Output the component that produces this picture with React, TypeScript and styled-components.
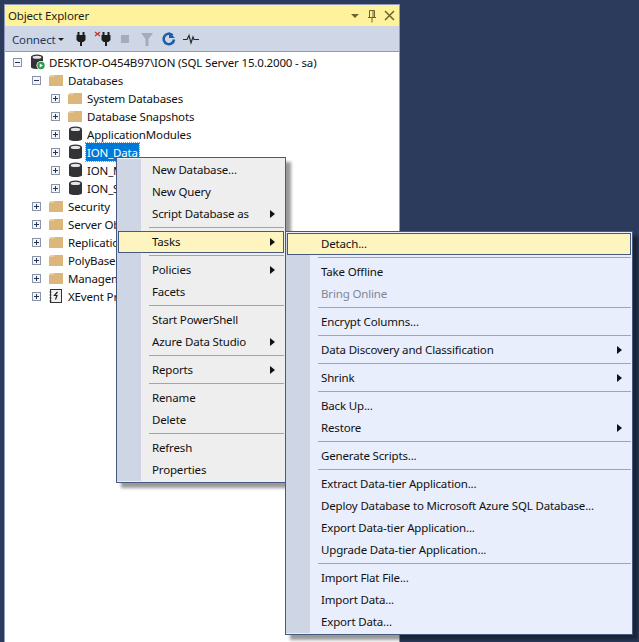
import React from 'react';
import styled, { createGlobalStyle } from 'styled-components';

const GlobalStyle = createGlobalStyle`
  html, body {
    margin: 0;
    height: 100%;
    overflow: hidden;
    background: #2c3b5b;
  }
  * {
    box-sizing: border-box;
  }
`;

type MenuEntry =
  | { sep: true }
  | { label: string; arrow?: boolean; active?: boolean; disabled?: boolean };

const contextItems: MenuEntry[] = [
  { label: 'New Database...' },
  { label: 'New Query' },
  { label: 'Script Database as', arrow: true },
  { sep: true },
  { label: 'Tasks', arrow: true, active: true },
  { sep: true },
  { label: 'Policies', arrow: true },
  { label: 'Facets' },
  { sep: true },
  { label: 'Start PowerShell' },
  { label: 'Azure Data Studio', arrow: true },
  { sep: true },
  { label: 'Reports', arrow: true },
  { sep: true },
  { label: 'Rename' },
  { label: 'Delete' },
  { sep: true },
  { label: 'Refresh' },
  { label: 'Properties' },
];

const taskItems: MenuEntry[] = [
  { label: 'Detach...', active: true },
  { sep: true },
  { label: 'Take Offline' },
  { label: 'Bring Online', disabled: true },
  { sep: true },
  { label: 'Encrypt Columns...' },
  { sep: true },
  { label: 'Data Discovery and Classification', arrow: true },
  { sep: true },
  { label: 'Shrink', arrow: true },
  { sep: true },
  { label: 'Back Up...' },
  { label: 'Restore', arrow: true },
  { sep: true },
  { label: 'Generate Scripts...' },
  { sep: true },
  { label: 'Extract Data-tier Application...' },
  { label: 'Deploy Database to Microsoft Azure SQL Database...' },
  { label: 'Export Data-tier Application...' },
  { label: 'Upgrade Data-tier Application...' },
  { sep: true },
  { label: 'Import Flat File...' },
  { label: 'Import Data...' },
  { label: 'Export Data...' },
];

type TreeNode = {
  label: string;
  level: number;
  icon: 'server' | 'folder' | 'db' | 'xevent';
  open?: boolean;
  selected?: boolean;
};

const treeNodes: TreeNode[] = [
  { label: 'DESKTOP-O454B97\\ION (SQL Server 15.0.2000 - sa)', level: 0, icon: 'server', open: true },
  { label: 'Databases', level: 1, icon: 'folder', open: true },
  { label: 'System Databases', level: 2, icon: 'folder' },
  { label: 'Database Snapshots', level: 2, icon: 'folder' },
  { label: 'ApplicationModules', level: 2, icon: 'db' },
  { label: 'ION_Data', level: 2, icon: 'db', selected: true },
  { label: 'ION_Model', level: 2, icon: 'db' },
  { label: 'ION_Stage', level: 2, icon: 'db' },
  { label: 'Security', level: 1, icon: 'folder' },
  { label: 'Server Objects', level: 1, icon: 'folder' },
  { label: 'Replication', level: 1, icon: 'folder' },
  { label: 'PolyBase', level: 1, icon: 'folder' },
  { label: 'Management', level: 1, icon: 'folder' },
  { label: 'XEvent Profiler', level: 1, icon: 'xevent' },
];

const FolderIcon = () => (
  <svg width="14" height="13" viewBox="0 0 14 13">
    <path d="M0 3 L2 1 H14 V12 H0 Z" fill="#dcb67a" />
    <path d="M0 3 L2 1 H6 L5 3 Z" fill="#e8cc9c" />
  </svg>
);

const DbIcon = () => (
  <svg width="15" height="16" viewBox="0 0 15 16">
    <path d="M1 3 V13 C1 15.8 14 15.8 14 13 V3 Z" fill="#333337" />
    <ellipse cx="7.5" cy="3.2" rx="6.5" ry="2.8" fill="#333337" />
    <ellipse cx="7.5" cy="3.4" rx="4.8" ry="1.6" fill="#e6e6e6" />
  </svg>
);

const ServerIcon = () => (
  <svg width="16" height="16" viewBox="0 0 16 16">
    <path d="M1 3 V13 C1 15.6 13 15.6 13 13 V3 Z" fill="#333337" />
    <ellipse cx="7" cy="3" rx="6" ry="2.6" fill="#333337" />
    <ellipse cx="7" cy="3.2" rx="4.4" ry="1.5" fill="#e6e6e6" />
    <circle cx="11" cy="11.5" r="4.5" fill="#fff" />
    <circle cx="11" cy="11.5" r="3.7" fill="#2e9e46" />
    <path d="M9.7 9.6 L12.9 11.5 L9.7 13.4 Z" fill="#fff" />
  </svg>
);

const XEventIcon = () => (
  <svg width="14" height="14" viewBox="0 0 14 14">
    <rect x="1.5" y="0.5" width="11" height="13" fill="#f0f0f0" stroke="#333" />
    <path d="M0.5 3 H2.5 M0.5 6 H2.5 M0.5 9 H2.5 M0.5 12 H2.5" stroke="#333" />
    <path d="M8.5 3 L5.5 6.5 H8 L6.5 10.5" fill="none" stroke="#222" strokeWidth="1.2" />
  </svg>
);

const PlugIcon = () => (
  <svg width="16" height="16" viewBox="0 0 16 16">
    <path d="M4.5 1 H6.5 V4 H9.5 V1 H11.5 V4 H12.5 V9 L10.5 11 H9 V15 H7 V11 H5.5 L3.5 9 V4 H4.5 Z" fill="#1e1e1e" />
  </svg>
);

const DisconnectIcon = () => (
  <svg width="18" height="16" viewBox="0 0 18 16">
    <path d="M8.5 1 H10.5 V4 H13.5 V1 H15.5 V4 H16.5 V9 L14.5 11 H13 V15 H11 V11 H9.5 L7.5 9 V4 H8.5 Z" fill="#1e1e1e" />
    <path d="M1 1 L6 5 M6 1 L1 5" stroke="#c8372d" strokeWidth="1.4" />
  </svg>
);

const StopIcon = () => (
  <svg width="16" height="16" viewBox="0 0 16 16">
    <rect x="4" y="4" width="8" height="8" fill="#a6acb8" />
  </svg>
);

const FilterIcon = () => (
  <svg width="16" height="16" viewBox="0 0 16 16">
    <path d="M2 2 H14 L9.5 8 V15 H6.5 V8 Z" fill="#a6acb8" />
  </svg>
);

const RefreshIcon = () => (
  <svg width="16" height="16" viewBox="0 0 16 16">
    <path d="M11.6 4.4 A5.2 5.2 0 1 0 13 8.5" fill="none" stroke="#1c5ea8" strokeWidth="2.6" />
    <path d="M8 1 V7 H14 Z" fill="#1c5ea8" />
  </svg>
);

const ActivityIcon = () => (
  <svg width="16" height="16" viewBox="0 0 16 16">
    <path d="M0 8.5 H4 L6 4.5 L8 12 L10 6 L11 8.5 H16" fill="none" stroke="#2a2a2a" strokeWidth="1.2" />
  </svg>
);

const TreeIcon: React.FC<{ kind: TreeNode['icon'] }> = ({ kind }) => {
  if (kind === 'server') return <ServerIcon />;
  if (kind === 'db') return <DbIcon />;
  if (kind === 'xevent') return <XEventIcon />;
  return <FolderIcon />;
};

const Menu: React.FC<{ items: MenuEntry[]; variant: 'context' | 'tasks' }> = ({ items, variant }) => {
  return (
    <MenuBox $variant={variant}>
      {items.map((item, i) =>
        'sep' in item ? (
          <Separator key={i} />
        ) : (
          <MenuItem key={item.label} $active={item.active} $disabled={item.disabled}>
            {item.label}
            {item.arrow && <Arrow />}
          </MenuItem>
        ),
      )}
    </MenuBox>
  );
};

const App: React.FC = () => {
  return (
    <Page>
      <GlobalStyle />
      <Panel>
        <TitleBar>
          <span>Object Explorer</span>
          <TitleButtons>
            <svg width="10" height="6" viewBox="0 0 10 6">
              <path d="M1 1 H9 L5 5 Z" fill="#6d6331" />
            </svg>
            <svg width="10" height="14" viewBox="0 0 10 14">
              <path d="M2.5 1.5 H7.5 V8.5 H2.5 Z M1 8.5 H9 M5 8.5 V13.5 M6 2 V8" fill="none" stroke="#6d6331" />
            </svg>
            <svg width="11" height="11" viewBox="0 0 11 11">
              <path d="M1 1 L10 10 M10 1 L1 10" stroke="#6d6331" strokeWidth="1.5" />
            </svg>
          </TitleButtons>
        </TitleBar>
        <Toolbar>
          <ConnectButton>
            Connect
            <Caret />
          </ConnectButton>
          <ToolCell><PlugIcon /></ToolCell>
          <ToolCell><DisconnectIcon /></ToolCell>
          <ToolCell><StopIcon /></ToolCell>
          <ToolCell><FilterIcon /></ToolCell>
          <ToolCell><RefreshIcon /></ToolCell>
          <ToolCell><ActivityIcon /></ToolCell>
        </Toolbar>
        <Tree>
          {treeNodes.map((node) => (
            <Row key={node.label} $level={node.level}>
              <Expander $open={node.open} />
              <IconSlot>
                <TreeIcon kind={node.icon} />
              </IconSlot>
              <RowLabel $selected={node.selected}>{node.label}</RowLabel>
            </Row>
          ))}
        </Tree>
      </Panel>
      <Menu items={contextItems} variant="context" />
      <Menu items={taskItems} variant="tasks" />
    </Page>
  );
};

export default App;

const Page = styled.div`
  position: relative;
  width: 639px;
  height: 642px;
  padding: 4px 0 0 4px;
  overflow: hidden;
  background: #2c3b5b;
  font-family: 'Noto Sans', 'Open Sans', sans-serif;
  font-size: 11.5px;
  letter-spacing: -0.16px;
  color: #111;
`;

const Panel = styled.div`
  display: flex;
  flex-direction: column;
  width: 396px;
  height: 638px;
  border: 1px solid #8e9bbc;
  border-bottom: 0;
  background: #fff;
`;

const TitleBar = styled.div`
  display: flex;
  align-items: center;
  justify-content: space-between;
  height: 21px;
  padding: 0 4px 0 3px;
  background: #fff29d;
  color: #1e1e1e;
`;

const TitleButtons = styled.div`
  display: flex;
  align-items: center;
  gap: 7px;
`;

const Toolbar = styled.div`
  display: flex;
  align-items: center;
  height: 26px;
  padding-left: 7px;
  background: #cfd6e5;
  border-bottom: 1px solid #8e9bbc;
`;

const ConnectButton = styled.div`
  display: flex;
  align-items: center;
  width: 58px;
  padding-top: 2px;
  color: #24365e;
`;

const Caret = styled.span`
  margin-left: 3px;
  border-top: 3px solid #1e1e1e;
  border-left: 3px solid transparent;
  border-right: 3px solid transparent;
`;

const ToolCell = styled.div`
  display: flex;
  align-items: center;
  justify-content: center;
  width: 22px;
`;

const Tree = styled.div`
  flex: 1;
  padding-top: 1px;
`;

const Row = styled.div<{ $level: number }>`
  display: flex;
  align-items: center;
  height: 18px;
  padding-left: ${(p) => 8 + p.$level * 19}px;
  white-space: nowrap;
`;

const Expander = styled.span<{ $open?: boolean }>`
  position: relative;
  flex: none;
  width: 9px;
  height: 9px;
  margin-right: 8px;
  border: 1px solid #8a94a8;
  background: #f4f5f8;

  &::before {
    content: '';
    position: absolute;
    left: 1px;
    top: 3px;
    width: 5px;
    height: 1px;
    background: #26344f;
  }

  &::after {
    content: '';
    display: ${(p) => (p.$open ? 'none' : 'block')};
    position: absolute;
    left: 3px;
    top: 1px;
    width: 1px;
    height: 5px;
    background: #26344f;
  }
`;

const IconSlot = styled.span`
  display: flex;
  align-items: center;
  flex: none;
  width: 16px;
  height: 16px;
  margin-right: 2px;
`;

const RowLabel = styled.span<{ $selected?: boolean }>`
  padding: 1px 1px 0;
  height: 18px;
  line-height: 18px;
  color: ${(p) => (p.$selected ? '#fff' : '#111')};
  background: ${(p) => (p.$selected ? '#0078d7' : 'transparent')};
  outline: ${(p) => (p.$selected ? '1px dotted #d9822b' : 'none')};
`;

const MenuBox = styled.div<{ $variant: 'context' | 'tasks' }>`
  position: absolute;
  left: ${(p) => (p.$variant === 'context' ? 116 : 285)}px;
  top: ${(p) => (p.$variant === 'context' ? 157 : 231)}px;
  width: ${(p) => (p.$variant === 'context' ? 170 : 348)}px;
  padding: 1px 0;
  border: 1px solid #465a80;
  background: linear-gradient(to right, #ced5e4 24px, transparent 24px) content-box no-repeat,
    ${(p) => (p.$variant === 'context' ? '#eeeeee' : '#e8eefc')};
  box-shadow: 5px 5px 3px rgba(0, 0, 0, 0.4);
  color: #111;
`;

const MenuItem = styled.div<{ $active?: boolean; $disabled?: boolean }>`
  position: relative;
  display: flex;
  align-items: center;
  height: 22px;
  margin: 0 1px;
  padding: 0 0 2px 33px;
  border: 1px solid ${(p) => (p.$active ? '#465a80' : 'transparent')};
  background: ${(p) => (p.$active ? '#fdf4bf' : 'transparent')};
  color: ${(p) => (p.$disabled ? '#7f8794' : '#111')};
  white-space: nowrap;
`;

const Arrow = styled.span`
  position: absolute;
  right: 8px;
  top: 6px;
  border-left: 5px solid #111;
  border-top: 4px solid transparent;
  border-bottom: 4px solid transparent;
`;

const Separator = styled.div`
  height: 1px;
  margin: 2px 1px 3px 32px;
  background: #9aa5ba;
`;
